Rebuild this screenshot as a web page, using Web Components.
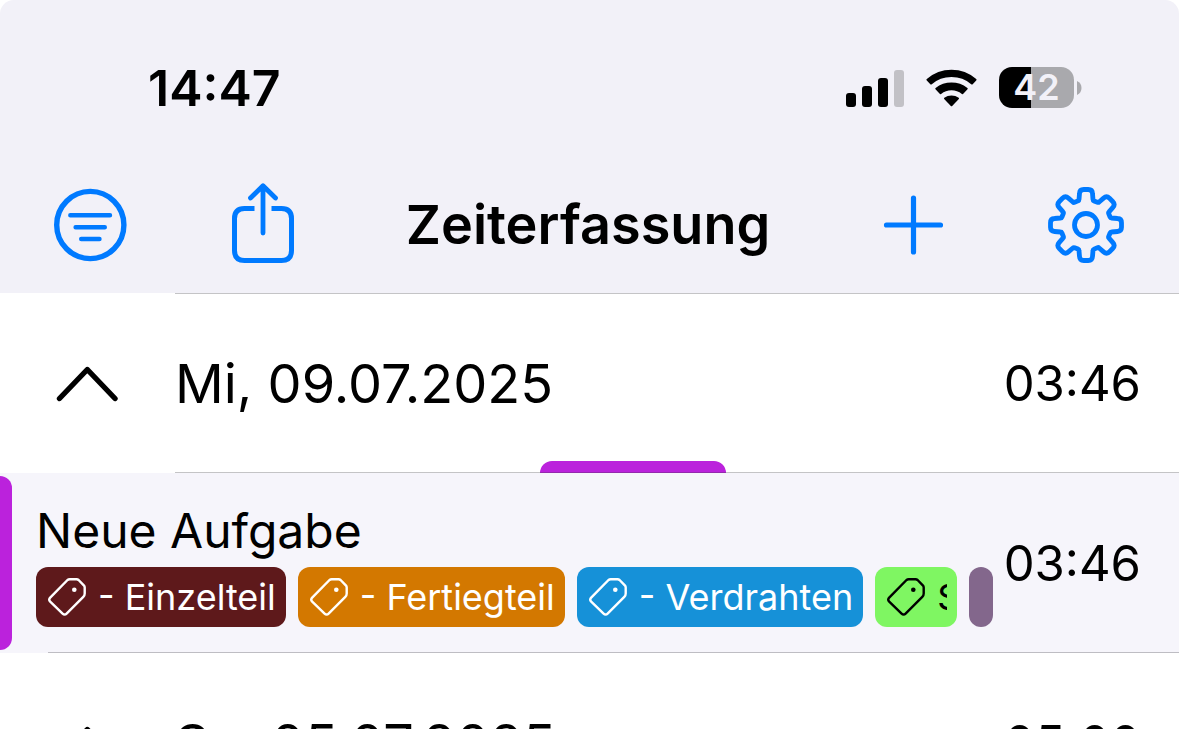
<!DOCTYPE html>
<html lang="de">
<head>
<meta charset="utf-8">
<meta name="viewport" content="width=device-width, initial-scale=1">
<title>Zeiterfassung</title>
<style>
  html { height: 100%; overflow: hidden; background: #fff; }
  body { margin: 0; font-family: Inter, "Liberation Sans", sans-serif; color: #000; }
</style>
</head>
<body>
<time-app></time-app>
<script>
const base = '*{box-sizing:border-box}svg{display:block;flex:none}';

const define = (name, css, html, setup) => {
  customElements.define(name, class extends HTMLElement {
    constructor() {
      super();
      this.attachShadow({ mode: 'open' }).innerHTML = `<style>${base}${css}</style>${html}`;
    }
    connectedCallback() { if (setup) setup(this, this.shadowRoot); }
  });
};

/* Outline of a rounded cog with eight teeth, centred on 40,40. */
const cogPath = (() => {
  const pts = [];
  for (let i = 0; i < 8; i++) {
    for (const [r, d] of [[25.5, -16], [36, -10], [36, 10], [25.5, 16]]) {
      const a = (i * 45 + d) * Math.PI / 180;
      pts.push([40 + r * Math.sin(a), 40 - r * Math.cos(a)]);
    }
  }
  const toward = (p, q, n) => {
    const l = Math.hypot(q[0] - p[0], q[1] - p[1]);
    return [p[0] + (q[0] - p[0]) * n / l, p[1] + (q[1] - p[1]) * n / l];
  };
  const f = p => p.map(v => v.toFixed(1)).join(' ');
  return pts.map((p, i) => {
    const prev = pts[(i + 31) % 32], next = pts[(i + 1) % 32];
    const n = i % 4 === 1 || i % 4 === 2 ? 4 : 1;
    return `${i ? 'L' : 'M'}${f(toward(p, prev, n))}Q${f(p)} ${f(toward(p, next, n))}`;
  }).join('') + 'Z';
})();

const icons = {
  filter: `<svg width="80" height="80" viewBox="0 0 80 80" fill="none" stroke="currentColor" stroke-width="5" stroke-linecap="round"><circle cx="40.300" cy="40" r="33.6" stroke-width="5.4"/><path stroke-width="4.400" d="M20.300 30.300h39.700M25.600 42.200h29.200M31.200 54h18.300"/></svg>`,
  share: `<svg width="80" height="80" viewBox="0 0 80 80" fill="none" stroke="currentColor" stroke-width="5"><path d="M31.500 23.500h-10q-10 0-10 10v32q0 10 10 10h37q10 0 10-10v-32q0-10-10-10h-10"/><path stroke-linecap="round" stroke-linejoin="round" stroke-width="4.800" d="M40 48V1M27.500 13L40 .8L52.500 13"/></svg>`,
  add: `<svg width="80" height="80" viewBox="0 0 80 80" fill="none" stroke="currentColor" stroke-width="5.200" stroke-linecap="round"><path d="M40.500 13v54M13.500 40h54"/></svg>`,
  settings: `<svg width="80" height="80" viewBox="0 0 80 80" fill="none" stroke="currentColor" stroke-width="4.800" stroke-linejoin="round"><path d="${cogPath}"/><circle cx="40" cy="40" r="11.500"/></svg>`
};

define('icon-button',
  ':host{display:block}button{display:block;border:0;background:none;padding:0;color:#007aff;width:80px;height:80px;cursor:pointer}svg{overflow:visible}',
  '<button type="button"></button>',
  (el, root) => {
    const b = root.querySelector('button');
    b.innerHTML = icons[el.getAttribute('icon')];
    b.setAttribute('aria-label', el.getAttribute('label'));
  });

define('battery-level',
  `:host{display:flex;align-items:center;gap:3px}
   .body{width:75px;height:41px;border-radius:13px;background:linear-gradient(90deg,#000 43%,#a9a9ad 43%);color:#f2f1f8;font-size:36px;line-height:41px;font-weight:600;text-align:center}`,
  `<div class="body"><slot></slot></div>
   <svg width="5" height="14" viewBox="0 0 5 14"><path fill="#a9a9ad" d="M0 0Q4.500 2 4.500 7T0 14z"/></svg>`);

define('status-bar',
  `:host{display:flex;align-items:center;justify-content:space-between;height:175px;padding:0 97px 0 148px;font-size:50px;font-weight:600}
   .state{display:flex;align-items:center;gap:22px}`,
  `<time><slot></slot></time>
   <div class="state">
    <svg width="58" height="38" viewBox="0 0 58 38"><rect y="24" width="10" height="14" rx="3"/><rect x="16" y="17" width="10" height="21" rx="3"/><rect x="32" y="9" width="10" height="29" rx="3"/><rect x="48" y="1" width="10" height="37" rx="3" fill="#c2c1c6"/></svg>
    <svg width="51" height="38" viewBox="0 0 51 38"><path d="M.8 11.500Q-.1 10.800.8 10Q11.500.8 25.500.8T50.200 10Q51 10.800 50.200 11.500L46.700 15.200Q46 15.900 45.200 15.200Q37 8 25.500 8T5.800 15.200Q5 15.900 4.300 15.200Z"/><path d="M9.500 20.300Q8.900 19.600 9.600 19Q16.500 13.600 25.500 13.600T41.400 19Q42.100 19.600 41.500 20.300L37.300 24.800Q36.600 25.500 35.900 24.900Q31.300 21.200 25.500 21.200T15.100 24.900Q14.400 25.500 13.700 24.800Z"/><path d="M18.200 30Q17.600 29.300 18.300 28.700Q21.500 26.600 25.500 26.600T32.700 28.700Q33.400 29.300 32.800 30L26.200 36.900Q25.500 37.500 24.800 36.900Z"/></svg>
    <battery-level>42</battery-level>
   </div>`);

define('nav-bar',
  `:host{display:grid;grid-template-columns:1fr auto 1fr;align-items:center;height:118px;padding:0 53px 19px 50px}
   .side{display:flex;align-items:center;gap:93px}
   .end{justify-content:flex-end}
   h1{margin:0;font-size:54px;line-height:68px;font-weight:600}`,
  `<div class="side"><slot name="start"></slot></div><h1><slot></slot></h1><div class="side end"><slot name="end"></slot></div>`);

define('day-row',
  `:host{display:block}
   .row{display:flex;align-items:center;height:180px;padding:2px 38px 0 0;position:relative}
   .row::after{content:"";position:absolute;left:175px;right:0;bottom:0;height:1px;background:rgba(60,60,67,.3)}
   button{width:175px;height:100px;padding:0 0 0 56px;border:0;background:none;color:#000;cursor:pointer}
   h2{flex:1;margin:0;font-size:54px;line-height:68px;font-weight:400;white-space:nowrap}
   time{font-size:49px;line-height:60px}
   .bar{position:absolute;left:540px;bottom:0;width:186px;height:12px;border-radius:12px 12px 0 0;background:#bb22dc}`,
  `<div class="row"><button type="button" aria-label="Tag einklappen"><svg width="62" height="36" viewBox="0 0 62 36" fill="none" stroke="currentColor" stroke-width="5.400" stroke-linecap="round" stroke-linejoin="round"><path d="M3.500 32.500L31.300 3.500L59 32.500"/></svg></button>
   <h2><slot></slot></h2><time><slot name="total"></slot></time></div>`,
  (el, root) => {
    if (el.hasAttribute('active')) {
      const bar = document.createElement('div');
      bar.className = 'bar';
      root.querySelector('.row').append(bar);
    }
  });

define('task-tag',
  `:host{display:flex;box-sizing:border-box;align-items:center;gap:12px;height:60px;padding:0 10px 0 12px;border-radius:12px;background:var(--tag);color:var(--ink,#fff);font-size:36px;line-height:42px;white-space:nowrap;flex:none}
   :host([cut]){width:82px}
   :host([empty]){width:24px;padding:0}
   :host([empty]) svg{display:none}
   span{overflow:hidden;min-width:0}`,
  `<svg width="38" height="38" viewBox="0 0 38 38" fill="none" stroke="currentColor" stroke-width="2.400" stroke-linejoin="round"><path d="M19.500 2Q20.500 1.200 21.700 1.200H28.500Q29.700 1.200 30.600 2L35.800 7.400Q36.700 8.300 36.700 9.500V15.500Q36.700 17.500 35.300 18.900L18.600 35.600Q16.600 37.600 14.600 35.600L2.200 23.600Q.3 21.700 2.200 19.700Z"/><circle cx="26.300" cy="11.700" r="2.300" fill="currentColor" stroke="none"/></svg><span><slot></slot></span>`);

define('task-row',
  `:host{display:flex;box-sizing:border-box;align-items:center;height:180px;padding:2px 38px 0 36px;background:#f6f5fb;position:relative}
   :host::before{content:"";position:absolute;left:0;top:3px;bottom:3px;width:12px;border-radius:0 12px 12px 0;background:#bb22dc}
   :host::after{content:"";position:absolute;left:48px;right:0;bottom:0;height:1px;background:rgba(60,60,67,.3)}
   .main{flex:1;min-width:0}
   h3{margin:0 0 6px;font-size:48px;line-height:60px;font-weight:400}
   .tags{display:flex;gap:12px}
   time{font-size:49px;line-height:60px}`,
  `<div class="main"><h3><slot></slot></h3><div class="tags"><slot name="tags"></slot></div></div><time><slot name="total"></slot></time>`);

define('time-app',
  `:host{display:block;height:100vh;overflow:hidden}
   header{background:#f2f1f8;border-radius:14px 14px 0 0;position:relative}
   header::after{content:"";position:absolute;left:175px;right:0;bottom:-1px;height:1px;background:rgba(60,60,67,.3)}`,
  `<header>
    <status-bar>14:47</status-bar>
    <nav-bar>
      <icon-button slot="start" icon="filter" label="Filter"></icon-button>
      <icon-button slot="start" icon="share" label="Teilen"></icon-button>
      Zeiterfassung
      <icon-button slot="end" icon="add" label="Hinzufügen"></icon-button>
      <icon-button slot="end" icon="settings" label="Einstellungen"></icon-button>
    </nav-bar>
   </header>
   <main>
    <day-row active>Mi, 09.07.2025<span slot="total">03:46</span></day-row>
    <task-row>Neue Aufgabe
      <task-tag slot="tags" style="--tag:#5e191b">- Einzelteil</task-tag>
      <task-tag slot="tags" style="--tag:#d37800">- Fertiegteil</task-tag>
      <task-tag slot="tags" style="--tag:#1691d8">- Verdrahten</task-tag>
      <task-tag slot="tags" cut style="--tag:#7ff662;--ink:#000">S</task-tag>
      <task-tag slot="tags" empty style="--tag:#83678c"></task-tag>
      <span slot="total">03:46</span>
    </task-row>
    <day-row>Sa, 05.07.2025<span slot="total">05:00</span></day-row>
   </main>`);
</script>
</body>
</html>
